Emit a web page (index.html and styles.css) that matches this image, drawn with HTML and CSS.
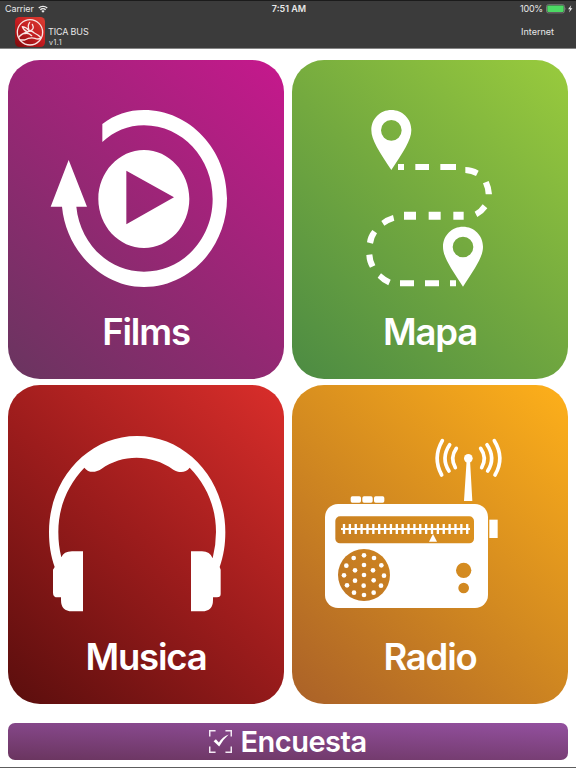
FILE: index.html
```html
<!DOCTYPE html>
<html lang="es">
  <head>
    <meta charset="UTF-8" />
    <meta name="viewport" content="width=device-width, initial-scale=1.0" />
    <title>TICA BUS</title>
    <link rel="stylesheet" href="styles.css">
  </head>
  <body>
    <header class="header">
      <div class="status-bar">
        <div class="status-left">
          <span>Carrier</span>
          <svg class="wifi" viewBox="0 0 20 16">
            <path d="M1.5 6a12.5 12.5 0 0 1 17 0M4.7 9.5a7.6 7.6 0 0 1 10.6 0" fill="none" stroke="#eee" stroke-width="2.8" />
            <path d="M10 15.5L6.6 12a4.8 4.8 0 0 1 6.8 0z" fill="#eee" />
          </svg>
        </div>
        <span class="time">7:51 AM</span>
        <div class="status-right">
          <span>100%</span>
          <svg class="battery" viewBox="0 0 27 10">
            <rect x="0.5" y="0.7" width="18" height="8.2" rx="1.8" fill="#3b3b3b" stroke="#777" stroke-width="1" />
            <rect x="1.3" y="1.5" width="16.4" height="6.6" rx="1" fill="#4cd964" />
            <path d="M19.4 3.3q1 1.5 0 3z" fill="#888" />
            <path d="M25.2 1.2L22 5.3h2l-1 3.2 3.4-4.3h-2z" fill="#eee" />
          </svg>
        </div>
      </div>
      <div class="nav-bar">
        <svg class="logo" viewBox="0 0 90 90">
          <defs>
            <linearGradient id="logoRed" x1="0" y1="1" x2="0.8" y2="0">
              <stop offset="0" stop-color="#7c0b0d" />
              <stop offset="0.55" stop-color="#c41c20" />
              <stop offset="1" stop-color="#d83a30" />
            </linearGradient>
          </defs>
          <rect width="90" height="90" rx="14" fill="url(#logoRed)" />
          <g fill="none" stroke="#f8e4e2" stroke-width="4" stroke-linecap="round" stroke-linejoin="round">
            <circle cx="45" cy="46" r="38" />
            <path d="M11 61Q19 50 38 45Q48 38 58 48Q69 53 78 62Q71 69 60 64Q45 60 29 69L16 69" />
            <path d="M38 45Q26 40 22 29Q35 31 43 42Q36 26 44 16M44 42Q60 37 52 22" />
            <path d="M29 50Q40 46 50 56" />
          </g>
        </svg>
        <div class="brand">
          <span class="brand-name">TICA BUS</span>
          <span class="brand-version">v1.1</span>
        </div>
        <span class="connection">Internet</span>
      </div>
    </header>

    <main class="menu">
      <a class="tile films">
        <svg class="tile-icon" viewBox="0 0 600 600">
          <path d="M187 87C224 59 265 45 312 45C449 45 561 164 561 310C561 456 449 576 312 576C187 576 79 469 66 335H32L86 195L141 335H109C120 446 207 530 312 530C426 530 518 434 518 312C518 190 427 91 312 91C264 91 222 109 187 141Z" fill="#fff" />
          <path fill-rule="evenodd" d="M312 165C387 165 448 231 448 312S387 459 312 459S175 393 175 312S237 165 312 165ZM259 227V388L402 307Z" fill="#fff" />
        </svg>
        <span class="tile-title">Films</span>
      </a>

      <a class="tile mapa">
        <svg class="tile-icon" viewBox="0 0 480 600">
          <g fill="#fff">
            <path id="pin" fill-rule="evenodd" d="M124 45C91 45 64 71 64 105C64 136 88 170 124 225C160 170 184 136 184 105C184 71 157 45 124 45ZM124 75A31 31 0 1 1 124 137A31 31 0 1 1 124 75Z" />
            <use href="#pin" x="215" y="350" />
            <!-- upper line -->
            <path d="M144 207h18v18h-18zM196 207h41v18h-41zM271 207h47v18h-47z" />
            <path d="M346 216Q367 216 386 227L378 243Q364 235 346 234ZM399 265L416 258Q425 277 426 298H407Q406 280 399 265ZM398 328L412 340Q401 356 382 366L374 350Q388 343 398 328Z" />
            <!-- middle line -->
            <path d="M162 350h36v24h-36zM236 350h36v24h-36zM310 350h31v24h-31z" />
            <path d="M94 378Q109 366 129 360L133 377Q117 382 103 392ZM67 405L81 415Q72 428 69 446L51 442Q53 422 67 405ZM49 480L67 478Q68 496 76 511L60 518Q50 502 49 480ZM93 535Q106 547 122 554L115 571Q98 564 83 548Z" />
            <!-- lower line -->
            <path d="M150 556h42v18h-42zM225 556h42v18h-42zM300 556h18v18h-18z" />
          </g>
        </svg>
        <span class="tile-title">Mapa</span>
      </a>

      <a class="tile musica">
        <svg class="tile-icon" viewBox="0 0 600 600">
          <path d="M44 426C32 392 27 360 27 321C27 162 145 33 291 33S556 162 556 321C556 360 551 392 539 426L542 434V507Q542 517 531 517H519V525Q519 559 486 559H453V379H486Q510 379 518 400Q528 360 528 321C528 244 498 178 449 128C437 144 417 144 400 134C333 87 248 87 184 132C166 144 145 144 133 128C85 178 55 244 55 321Q55 362 64 397Q71 379 96 379H129V559H96Q63 559 63 525V517H53Q39 517 39 503V434Z" fill="#fff" />
        </svg>
        <span class="tile-title">Musica</span>
      </a>

      <a class="tile radio">
        <svg class="tile-icon" viewBox="0 0 600 570">
          <defs>
            <mask id="radioCutouts">
              <rect x="0" y="200" width="600" height="370" fill="#fff" />
              <rect x="61" y="259" width="416" height="81" rx="14" fill="#000" />
              <circle cx="147" cy="435" r="78" fill="#000" />
              <circle cx="446" cy="421" r="23" fill="#000" />
              <circle cx="446" cy="474" r="16" fill="#000" />
            </mask>
          </defs>
          <g fill="#fff">
            <rect x="30" y="222" width="489" height="312" rx="39" mask="url(#radioCutouts)" />
            <rect x="107" y="199" width="31" height="19" rx="5" />
            <rect x="142" y="199" width="31" height="19" rx="5" />
            <rect x="177" y="199" width="31" height="19" rx="5" />
            <rect x="523" y="269" width="25" height="55" />
            <path d="M354 312L366 335H342ZM455 90H465L472 213H447Z" />
            <circle cx="460" cy="85" r="13" />
            <!-- speaker holes -->
            <circle cx="147" cy="376" r="7" /><circle cx="177" cy="384" r="7" />
            <circle cx="199" cy="406" r="7" /><circle cx="207" cy="437" r="7" />
            <circle cx="198" cy="467" r="7" /><circle cx="176" cy="488" r="7" />
            <circle cx="147" cy="495" r="7" /><circle cx="117" cy="488" r="7" />
            <circle cx="96" cy="466" r="7" /><circle cx="87" cy="436" r="7" />
            <circle cx="94" cy="407" r="7" /><circle cx="116" cy="384" r="7" />
            <circle cx="147" cy="405" r="7" /><circle cx="174" cy="421" r="7" />
            <circle cx="176" cy="451" r="7" /><circle cx="146" cy="467" r="7" />
            <circle cx="120" cy="452" r="7" /><circle cx="120" cy="421" r="7" />
            <circle cx="147" cy="435" r="7" />
          </g>
          <g fill="none" stroke="#fff">
            <path d="M78 297H465" stroke-width="6" />
            <path d="M83.5 297H461" stroke-width="30" stroke-dasharray="7 10.6" />
            <path d="M424 55Q404 83 421 113M404 44Q377 84 402 123M382 32Q352 84 380 135M497 55Q517 83 500 113M516 44Q543 84 518 123M538 32Q570 84 540 135" stroke-width="11" stroke-linecap="round" />
          </g>
        </svg>
        <span class="tile-title">Radio</span>
      </a>
    </main>

    <button class="survey">
      <svg class="survey-icon" viewBox="0 0 70 70">
        <path d="M2 20V2H20M50 2H68V20M68 50V68H50M20 68H2V50" fill="none" stroke="#f3e9f4" stroke-width="5" />
        <path d="M14 34L21 28L30 38Q42 21 60 14Q43 29 31 50Z" fill="#fff" />
      </svg>
      <span>Encuesta</span>
    </button>
    <div class="bottom-line"></div>
  </body>
</html>
```

FILE: styles.css
```css
* {
  box-sizing: border-box;
}
body {
  margin: 0;
  height: 768px;
  display: flex;
  flex-direction: column;
  overflow: hidden;
  background: #fff;
  font-family: Inter, "Liberation Sans", sans-serif;
}
.header {
  height: 49px;
  background: #3b3b3b;
  border-top: 1px solid #1b1b1b;
  border-bottom: 1px solid #858585;
  color: #e8e8e8;
}
.status-bar {
  display: grid;
  grid-template-columns: 1fr auto 1fr;
  align-items: center;
  height: 15px;
  padding: 0 3px 0 5px;
  font-size: 9px;
  line-height: 15px;
}
.status-left,
.status-right {
  display: flex;
  align-items: center;
}
.status-left {
  gap: 4px;
  letter-spacing: -0.1px;
}
.status-right {
  justify-content: flex-end;
  gap: 3px;
  letter-spacing: -0.2px;
}
.wifi {
  width: 10px;
  height: 8px;
}
.time {
  font-weight: 600;
}
.battery {
  width: 27px;
  height: 10px;
}
.nav-bar {
  display: flex;
  height: 31px;
  padding: 1px 22px 0 15px;
}
.logo {
  width: 30px;
  height: 30px;
}
.brand {
  display: flex;
  flex-direction: column;
  padding: 9px 0 0 3px;
}
.brand-name {
  font-size: 9px;
  line-height: 12px;
  letter-spacing: -0.15px;
}
.brand-version {
  padding-left: 1px;
  font-size: 7px;
  line-height: 10px;
  letter-spacing: 0.5px;
}
.connection {
  margin-left: auto;
  padding-top: 9px;
  font-size: 9px;
  line-height: 12px;
}
.menu {
  display: grid;
  grid-template-columns: 276px 276px;
  grid-template-rows: 318.5px 318.5px;
  gap: 6.5px 8px;
  padding: 11px 8px 0;
}
.tile {
  display: flex;
  flex-direction: column;
  border-radius: 32px;
  color: #fff;
}
.films {
  padding: 35px 32px 0;
  background: linear-gradient(42deg, #69355f, #962774 48%, #c6188d);
}
.mapa {
  padding: 35px 58px 0;
  background: linear-gradient(42deg, #4c8b43, #73a93f 50%, #99cb3d);
}
.musica {
  padding: 40px 32px 0;
  background: linear-gradient(42deg, #5a0e0d, #9c1c1c 50%, #da2e2b);
}
.radio {
  padding: 45px 23px 0;
  background: linear-gradient(42deg, #aa6128, #d38a20 50%, #feb01a);
}
.tile-icon {
  display: block;
  width: 200px;
  height: 200px;
}
.mapa .tile-icon {
  width: 160px;
}
.radio .tile-icon {
  height: 190px;
}
.tile-title {
  margin-top: 13px;
  align-self: center;
  font-size: 36.5px;
  font-weight: 600;
  line-height: 48px;
  letter-spacing: -1.2px;
  white-space: nowrap;
}
.musica .tile-title {
  margin-top: 8px;
}
.survey {
  display: flex;
  align-items: center;
  justify-content: center;
  gap: 8px;
  height: 37px;
  margin: 19px 8px 0;
  padding: 0;
  border: none;
  border-radius: 7px;
  background: linear-gradient(2deg, #6a355f, #93509f);
  color: #fff;
  font-family: inherit;
  font-size: 29px;
  font-weight: 600;
  letter-spacing: -0.5px;
}
.survey-icon {
  width: 23px;
  height: 23px;
}
.bottom-line {
  height: 1px;
  margin-top: auto;
  background: #5d5d5d;
}
```
